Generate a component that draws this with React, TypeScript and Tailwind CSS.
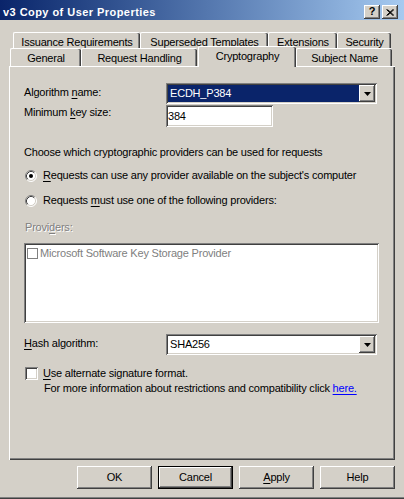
import React from "react";

const raised =
  "shadow-[inset_-1px_-1px_0_#404040,inset_1px_1px_0_#ffffff,inset_-2px_-2px_0_#808080]";
const sunken =
  "shadow-[inset_1px_1px_0_#808080,inset_-1px_-1px_0_#ffffff,inset_2px_2px_0_#404040,inset_-2px_-2px_0_#d4d0c8]";

function U({ children }: { children: React.ReactNode }) {
  return <span className="underline underline-offset-[2px] decoration-[1px]">{children}</span>;
}

function Radio({ checked }: { checked?: boolean }) {
  return (
    <svg width="12" height="12" viewBox="0 0 12 12" className="shrink-0">
      <circle cx="6" cy="6" r="5" fill="#ffffff" />
      <path d="M2.11 9.89 A5.5 5.5 0 0 1 9.89 2.11" fill="none" stroke="#808080" strokeWidth="1" />
      <path d="M2.82 9.18 A4.5 4.5 0 0 1 9.18 2.82" fill="none" stroke="#404040" strokeWidth="1" />
      <path d="M9.89 2.11 A5.5 5.5 0 0 1 2.11 9.89" fill="none" stroke="#ffffff" strokeWidth="1" />
      <path d="M9.18 2.82 A4.5 4.5 0 0 1 2.82 9.18" fill="none" stroke="#d4d0c8" strokeWidth="1" />
      {checked && <circle cx="6" cy="6" r="2" fill="#000000" />}
    </svg>
  );
}

function Arrow() {
  return (
    <svg width="7" height="4" viewBox="0 0 7 4">
      <path d="M0 0H7L3.5 4Z" fill="#000" />
    </svg>
  );
}

function Combo({ text, selected }: { text: string; selected?: boolean }) {
  return (
    <div className={`w-[211px] h-[21px] bg-white ${sunken} p-[2px] flex`}>
      <div
        className={`flex-1 flex items-center pl-[2px] ${
          selected ? "bg-[#0a246a] text-white" : "text-black"
        }`}
      >
        {text}
      </div>
      <div className={`w-[16px] h-full bg-[#d4d0c8] ${raised} flex items-center justify-center`}>
        <Arrow />
      </div>
    </div>
  );
}

function Tab({
  label,
  w,
  selected,
}: {
  label: string;
  w: string;
  selected?: boolean;
}) {
  return (
    <div
      className={`${w} ${
        selected ? "h-[21px] -mt-[2px] relative z-10 pt-[3px]" : "h-full pt-[3px]"
      } bg-[#d4d0c8] border-l border-t border-white rounded-tl-[2px] rounded-tr-[2px] shadow-[inset_-1px_0_0_#404040,inset_-2px_0_0_#808080] text-center whitespace-nowrap`}
    >
      {label}
    </div>
  );
}

function Button({ label, def }: { label: React.ReactNode; def?: boolean }) {
  return (
    <div
      className={`w-[75px] h-[23px] flex items-center justify-center ${
        def ? "border border-black" : ""
      }`}
    >
      <div className={`w-full h-full flex items-center justify-center ${raised}`}>{label}</div>
    </div>
  );
}

export default function App() {
  return (
    <div className="w-[404px] h-[499px] bg-[#d4d0c8] flex flex-col font-['Liberation_Sans','Arial',sans-serif] text-[11px] leading-[13px] tracking-[-0.2px] text-black overflow-hidden shadow-[inset_0_-1px_0_#404040,inset_0_-2px_0_#808080]">
      {/* title bar */}
      <div className="h-[20px] shrink-0 bg-linear-to-r from-[#0a246a] to-[#a6caf0] flex items-start">
        <div className="pt-[6px] pl-[3px] text-white font-bold text-[11px] leading-[13px] tracking-[0.45px]">
          v3 Copy of User Properties
        </div>
        <div className="ml-auto mr-[6px] mt-[5px] flex gap-[2px]">
          <div
            className={`w-[16px] h-[14px] bg-[#d4d0c8] ${raised} flex items-center justify-center font-bold text-[11px] leading-[11px] pb-[1px]`}
          >
            ?
          </div>
          <div className={`w-[16px] h-[14px] bg-[#d4d0c8] ${raised} flex items-center justify-center`}>
            <svg width="8" height="7" viewBox="0 0 8 7">
              <path d="M0.5 0.5L7 6.5M1.5 0.5L8 6.5M7 0.5L0.5 6.5M8 0.5L1.5 6.5" stroke="#000" strokeWidth="1" />
            </svg>
          </div>
        </div>
      </div>

      {/* tab strip */}
      <div className="mt-[12px] flex flex-col">
        <div className="h-[16px] flex pl-[13px]">
          <Tab label="Issuance Requirements" w="w-[127px]" />
          <Tab label="Superseded Templates" w="w-[128px]" />
          <Tab label="Extensions" w="w-[69px]" />
          <Tab label="Security" w="w-[54px]" />
        </div>
        <div className="h-[18px] flex pl-[10px] items-start">
          <Tab label="General" w="w-[71px]" />
          <Tab label="Request Handling" w="w-[116px]" />
          <div className="w-[1px]" />
          <Tab label="Cryptography" w="w-[98px]" selected />
          <Tab label="Subject Name" w="w-[96px]" />
        </div>
      </div>

      {/* panel */}
      <div className="ml-[9px] w-[386px] h-[394px] border-l border-t border-white shadow-[inset_-1px_-1px_0_#404040,inset_-2px_-2px_0_#808080] pl-[14px] flex flex-col">
        <div className="mt-[16px] h-[21px] flex">
          <div className="w-[142px] mt-[3px]">
            Algorithm <U>n</U>ame:
          </div>
          <Combo text="ECDH_P384" selected />
        </div>
        <div className="mt-[1px] h-[22px] flex">
          <div className="w-[142px] mt-[1px]">
            Minimum <U>k</U>ey size:
          </div>
          <div className={`w-[107px] h-[22px] bg-white ${sunken} flex items-center pl-[2px]`}>384</div>
        </div>
        <div className="mt-[19px] h-[13px]">
          Choose which cryptographic providers can be used for requests
        </div>
        <div className="mt-[10px] h-[13px] flex items-center">
          <div className="w-[19px] pl-[1px]">
            <Radio checked />
          </div>
          <div>
            <U>R</U>equests can use any provider available on the subject&apos;s computer
          </div>
        </div>
        <div className="mt-[12px] h-[13px] flex items-center">
          <div className="w-[19px] pl-[1px]">
            <Radio />
          </div>
          <div>
            Requests <U>m</U>ust use one of the following providers:
          </div>
        </div>
        <div className="mt-[14px] h-[13px] pl-[1px] text-[#808080] [text-shadow:1px_1px_0_#ffffff]">
          Provi<U>d</U>ers:
        </div>
        <div className={`mt-[9px] w-[355px] h-[80px] bg-white ${sunken} pt-[4px] pl-[3px] flex items-start`}>
          <div className="flex items-center h-[13px]">
            <div className="w-[11px] h-[11px] border border-[#808080] mr-[2px]" />
            <span className="text-[#808080]">Microsoft Software Key Storage Provider</span>
          </div>
        </div>
        <div className="mt-[11px] h-[21px] flex">
          <div className="w-[142px] mt-[3px]">
            <U>H</U>ash algorithm:
          </div>
          <Combo text="SHA256" />
        </div>
        <div className="mt-[12px] h-[13px] flex items-center">
          <div className="w-[19px] pl-[1px]">
            <div className={`w-[13px] h-[13px] bg-white ${sunken}`} />
          </div>
          <div>
            <U>U</U>se alternate signature format.
          </div>
        </div>
        <div className="mt-[2px] h-[13px] pl-[20px]">
          For more information about restrictions and compatibility click{" "}
          <span className="text-[#0000ff] underline underline-offset-[2px]">here.</span>
        </div>
      </div>

      {/* buttons */}
      <div className="mt-[6px] flex gap-[6px] pl-[77px]">
        <Button label="OK" />
        <Button label="Cancel" def />
        <Button
          label={
            <span>
              <U>A</U>pply
            </span>
          }
        />
        <Button label="Help" />
      </div>
    </div>
  );
}
